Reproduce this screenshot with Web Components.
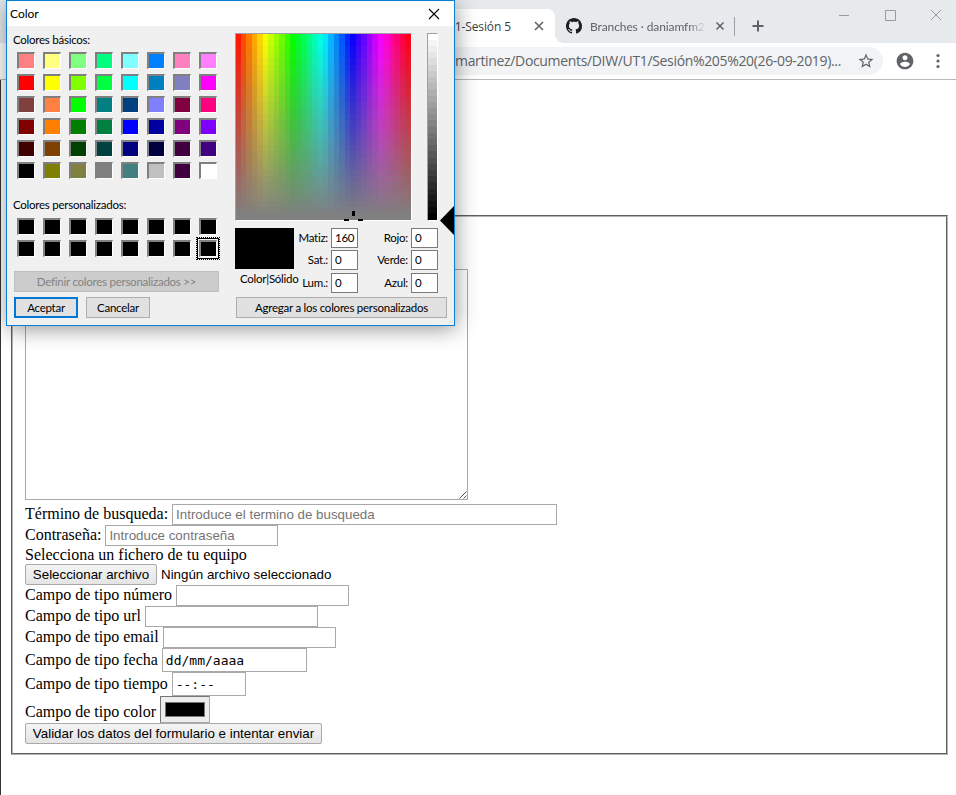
<!DOCTYPE html>
<html lang="es">
<head>
<meta charset="utf-8">
<title>Color</title>
<style>
  html, body { margin: 0; padding: 0; background: #fff; }
  body { width: 956px; height: 795px; overflow: hidden; position: relative; }
</style>
</head>
<body>
<browser-window>
  <tab-strip></tab-strip>
  <browser-toolbar>martinez/Documents/DIW/UT1/Sesión%205%20(26-09-2019)...</browser-toolbar>
  <form-panel>
    <form-row style="margin-top: 4px">Término de busqueda: <form-field w="385" ph>Introduce el termino de busqueda</form-field></form-row>
    <form-row>Contraseña: <form-field w="173" ph>Introduce contraseña</form-field></form-row>
    <form-row style="--row: 18px; --lh: 18px">Selecciona un fichero de tu equipo</form-row>
    <form-row><push-button w="132">Seleccionar archivo</push-button><small-note>Ningún archivo seleccionado</small-note></form-row>
    <form-row>Campo de tipo número <form-field w="173"></form-field></form-row>
    <form-row>Campo de tipo url <form-field w="173"></form-field></form-row>
    <form-row>Campo de tipo email <form-field w="173"></form-field></form-row>
    <form-row style="--row: 24px; --lh: 24px">Campo de tipo fecha <form-field w="145" h="24" mono>dd/mm/aaaa</form-field></form-row>
    <form-row style="--row: 24px; --lh: 24px">Campo de tipo tiempo <form-field w="74" h="24" mono>--:--</form-field></form-row>
    <form-row style="--row: 27px; --lh: 31px">Campo de tipo color <color-well></color-well></form-row>
    <form-row><push-button w="297">Validar los datos del formulario e intentar enviar</push-button></form-row>
  </form-panel>
</browser-window>
<color-dialog></color-dialog>

<script>
// small helper so every element just declares its markup + styles
function shadow(el, html) {
  el.attachShadow({ mode: 'open' }).innerHTML = html;
}

class BrowserWindow extends HTMLElement {
  constructor() {
    super();
    shadow(this, `<style>
      :host { display: flex; flex-direction: column; width: 956px; height: 795px; background: #fff; }
    </style><slot></slot>`);
  }
}

class TabStrip extends HTMLElement {
  constructor() {
    super();
    shadow(this, `<style>
      :host { display: flex; height: 43px; flex: none; background: #e7eaed; font: 12px "Open Sans", sans-serif; letter-spacing: -.1px; color: #5f6368; position: relative; }
      .active { width: 455px; margin: 9px 0 0 100px; height: 34px; background: #fff; border-radius: 0 8px 0 0; display: flex; align-items: center; justify-content: flex-end; padding-right: 11px; box-sizing: border-box; color: #3c4043; position: relative; }
      .active span { margin-right: 23px; }
      .corner { position: absolute; left: 555px; top: 35px; width: 8px; height: 8px; background: radial-gradient(circle at 8px 0, #e7eaed 7.5px, #fff 8px); }
      .tab { display: flex; align-items: center; width: 180px; margin-top: 9px; height: 34px; padding-left: 11px; box-sizing: border-box; }
      .tab svg.gh { width: 16px; height: 16px; margin-right: 8px; flex: none; }
      .title { width: 116px; flex: none; font: 12px Lato, sans-serif; letter-spacing: -.1px; white-space: nowrap; -webkit-mask-image: linear-gradient(to right, #000 85%, transparent); mask-image: linear-gradient(to right, #000 85%, transparent); }
      .x { width: 10px; height: 10px; flex: none; }
      .tab .x { margin-left: 9px; }
      .sep { width: 1px; height: 19px; background: #9aa0a6; margin: 17px 0 0 -1px; flex: none; }
      .plus { width: 12px; height: 12px; margin: 20px 0 0 17px; flex: none; }
      .controls { margin-left: auto; display: flex; height: 30px; }
      .controls svg { width: 46px; height: 30px; display: block; }
    </style>
    <div class="active"><span>1-Sesión 5</span>
      <svg class="x" viewBox="0 0 10 10"><path d="M1 1l8 8M9 1l-8 8" stroke="#5f6368" stroke-width="1.6" fill="none"/></svg>
    </div>
    <div class="corner"></div>
    <div class="tab">
      <svg class="gh" viewBox="0 0 16 16"><path fill="#1b1f23" d="M8 0C3.58 0 0 3.58 0 8c0 3.54 2.29 6.53 5.47 7.59.4.07.55-.17.55-.38 0-.19-.01-.82-.01-1.49-2.01.37-2.53-.49-2.69-.94-.09-.23-.48-.94-.82-1.13-.28-.15-.68-.52-.01-.53.63-.01 1.08.58 1.23.82.72 1.21 1.87.87 2.33.66.07-.52.28-.87.51-1.07-1.78-.2-3.64-.89-3.64-3.95 0-.87.31-1.59.82-2.15-.08-.2-.36-1.02.08-2.12 0 0 .67-.21 2.2.82.64-.18 1.32-.27 2-.27.68 0 1.36.09 2 .27 1.53-1.04 2.2-.82 2.2-.82.44 1.1.16 1.92.08 2.12.51.56.82 1.27.82 2.15 0 3.07-1.87 3.75-3.65 3.95.29.25.54.73.54 1.48 0 1.07-.01 1.93-.01 2.2 0 .21.15.46.55.38A8.013 8.013 0 0016 8c0-4.42-3.58-8-8-8z"/></svg>
      <div class="title">Branches · daniamfm2</div>
      <svg class="x" viewBox="0 0 10 10"><path d="M1.5 1.5l7 7M8.5 1.5l-7 7" stroke="#5f6368" stroke-width="1.5" fill="none"/></svg>
    </div>
    <div class="sep"></div>
    <svg class="plus" viewBox="0 0 12 12"><path d="M6 .5v11M.5 6h11" stroke="#5f6368" stroke-width="2" fill="none"/></svg>
    <div class="controls">
      <svg viewBox="0 0 46 30"><path d="M21 15.5h10" stroke="#9a9a9a" fill="none"/></svg>
      <svg viewBox="0 0 46 30"><path d="M21.5 10.5h10v10h-10z" stroke="#9a9a9a" fill="none"/></svg>
      <svg viewBox="0 0 46 30"><path d="M21 10l10 10M31 10l-10 10" stroke="#9a9a9a" fill="none"/></svg>
    </div>`);
  }
}

class BrowserToolbar extends HTMLElement {
  constructor() {
    super();
    shadow(this, `<style>
      :host { display: flex; align-items: center; height: 37px; flex: none; box-sizing: border-box; background: #fff; border-bottom: 1px solid #b8b8b8; position: relative; }
      .pill { margin-left: 100px; width: 783px; height: 28px; margin-top: -1px; border-radius: 0 14px 14px 0; background: #f1f3f4; display: flex; align-items: center; justify-content: flex-end; box-sizing: border-box; padding-right: 8px; font: 14px "Open Sans", sans-serif; letter-spacing: -.34px; color: #5f6368; white-space: nowrap; }
      .pill svg { width: 18px; height: 18px; margin-left: 16px; flex: none; }
      .avatar { width: 20px; height: 20px; margin: -1px 0 0 12px; flex: none; }
      .dots { width: 4px; height: 16px; margin: -1px 0 0 21px; flex: none; }
    </style>
    <div class="pill"><slot></slot>
      <svg viewBox="0 0 24 24"><path fill="#5f6368" d="M22 9.24l-7.19-.62L12 2 9.19 8.63 2 9.24l5.46 4.73L5.82 21 12 17.27 18.18 21l-1.63-7.03L22 9.24zM12 15.4l-3.76 2.27 1-4.28-3.32-2.88 4.38-.38L12 6.1l1.71 4.04 4.38.38-3.32 2.88 1 4.28L12 15.4z"/></svg>
    </div>
    <svg class="avatar" viewBox="0 0 24 24"><path fill="#5f6368" d="M12 2C6.48 2 2 6.48 2 12s4.48 10 10 10 10-4.48 10-10S17.52 2 12 2zm0 3c1.66 0 3 1.34 3 3s-1.34 3-3 3-3-1.34-3-3 1.34-3 3-3zm0 14.2c-2.5 0-4.71-1.28-6-3.22.03-1.99 4-3.08 6-3.08 1.99 0 5.97 1.09 6 3.08-1.29 1.94-3.5 3.22-6 3.22z"/></svg>
    <svg class="dots" viewBox="0 0 4 16"><circle cx="2" cy="2.5" r="1.6" fill="#5f6368"/><circle cx="2" cy="8" r="1.6" fill="#5f6368"/><circle cx="2" cy="13.5" r="1.6" fill="#5f6368"/></svg>`);
  }
}

class FormPanel extends HTMLElement {
  constructor() {
    super();
    shadow(this, `<style>
      :host { display: block; flex: 1; border-left: 1px solid #333; padding: 135px 8px 0 10px; font: 16px/18px "Liberation Serif", serif; color: #000; }
      .set { border: 2px groove #b4b4b4; padding: 52px 12px 9px; height: 540px; box-sizing: border-box; display: flex; flex-direction: column; }
      .area { width: 443px; height: 231px; box-sizing: border-box; border: 1px solid #a9a9a9; position: relative; flex: none; }
      .area svg { position: absolute; right: 0; bottom: 0; width: 9px; height: 9px; }
    </style>
    <div class="set">
      <div class="area"><svg viewBox="0 0 9 9"><path d="M8.5 1.5l-7 7M8.5 5.5l-3 3" stroke="#555" fill="none"/></svg></div>
      <slot></slot>
    </div>`);
  }
}

class FormRow extends HTMLElement {
  constructor() {
    super();
    shadow(this, `<style>
      :host { display: flex; align-items: flex-start; gap: 4px; height: var(--row, 21px); line-height: var(--lh, 19px); flex: none; white-space: nowrap; }
    </style><slot></slot>`);
  }
}

class FormField extends HTMLElement {
  constructor() {
    super();
    const ph = this.hasAttribute('ph'), mono = this.hasAttribute('mono');
    shadow(this, `<style>
      :host { display: flex; align-items: center; box-sizing: border-box; width: ${this.getAttribute('w')}px; height: ${this.getAttribute('h') || 21}px; flex: none; border: 1px solid #a9a9a9; background: #fff; padding: 0 3px; overflow: hidden;
        font: ${mono ? '13px "DejaVu Sans Mono", monospace' : '13.33px "Liberation Sans", sans-serif'}; color: ${ph ? '#757575' : '#000'}; }
    </style><slot></slot>`);
  }
}

class PushButton extends HTMLElement {
  constructor() {
    super();
    shadow(this, `<style>
      :host { display: flex; align-items: center; justify-content: center; box-sizing: border-box; width: ${this.getAttribute('w')}px; height: 21px; flex: none; border: 1px solid #a9a9a9; border-radius: 2px; background: linear-gradient(#f4f4f4, #e4e4e4); font: 13.33px "Liberation Sans", sans-serif; color: #000; }
    </style><slot></slot>`);
  }
}

class SmallNote extends HTMLElement {
  constructor() {
    super();
    shadow(this, `<style>:host { display: block; align-self: center; font: 13.33px "Liberation Sans", sans-serif; color: #000; }</style><slot></slot>`);
  }
}

class ColorWell extends HTMLElement {
  constructor() {
    super();
    shadow(this, `<style>
      :host { display: flex; align-items: center; justify-content: center; width: 50px; height: 27px; box-sizing: border-box; flex: none; border: 1px solid #767676; border-bottom-color: #a9a9a9; border-right-color: #a9a9a9; background: #ececec; }
      div { width: 40px; height: 15px; box-sizing: border-box; background: #000; border: 1px solid #777; }
    </style><div></div>`);
  }
}

const BASIC = [
  '#ff8080','#ffff80','#80ff80','#00ff80','#80ffff','#0080ff','#ff80c0','#ff80ff',
  '#ff0000','#ffff00','#80ff00','#00ff40','#00ffff','#0080c0','#8080c0','#ff00ff',
  '#804040','#ff8040','#00ff00','#008080','#004080','#8080ff','#800040','#ff0080',
  '#800000','#ff8000','#008000','#008040','#0000ff','#0000a0','#800080','#8000ff',
  '#400000','#804000','#004000','#004040','#000080','#000040','#400040','#400080',
  '#000000','#808000','#808040','#808080','#408080','#c0c0c0','#400040','#ffffff'
];

class ColorDialog extends HTMLElement {
  constructor() {
    super();
    const swatch = (c, extra) => `<i class="${extra || ''}" style="background:${c}"></i>`;
    const customs = Array.from({ length: 16 }, (_, i) => swatch('#000', i === 15 ? 'sel' : '')).join('');
    const num = (label, value) => `<label>${label}</label><output>${value}</output>`;
    shadow(this, `<style>
      :host { position: absolute; left: 6px; top: 0; width: 449px; height: 326px; box-sizing: border-box; border: 1px solid #0a7fd8; background: #f0f0f0; box-shadow: 1px 3px 20px rgba(0,0,0,.42); font: 11.5px Lato, sans-serif; letter-spacing: -.25px; color: #000; display: flex; flex-direction: column; }
      .title { height: 25px; flex: none; background: #fff; display: flex; align-items: center; justify-content: space-between; padding: 0 14px 0 3px; font-size: 12px; letter-spacing: 0; }
      .title svg { width: 12px; height: 12px; }
      .body { display: flex; flex: 1; padding: 6px 0 0 6px; position: relative; }
      .left { width: 222px; flex: none; }
      .cap { line-height: 16px; }
      .grid { display: grid; grid-template-columns: repeat(8, 18px); grid-auto-rows: 17px; gap: 5px 8px; margin: 4px 0 0 4px; }
      i { display: block; box-sizing: border-box; border-style: solid; border-width: 2px 1px 1px 2px; border-color: #808080 #fff #fff #808080; }
      i.sel { box-shadow: 0 0 0 1px #f0f0f0, 0 0 0 2px #000; outline: 1px dotted #000; outline-offset: 2px; }
      button { display: block; box-sizing: border-box; font: inherit; letter-spacing: inherit; color: #000; background: #e1e1e1; border: 1px solid #adadad; padding: 0; height: 21px; }
      .define { width: 205px; margin: 14px 0 0 1px; background: #cccccc; border-color: #bfbfbf; color: #838383; }
      .actions { display: flex; gap: 8px; margin: 5px 0 0 1px; }
      .actions button { width: 64px; }
      .actions .ok { border: 2px solid #0078d7; }
      .right { flex: none; width: 212px; margin-top: 1px; }
      .top { display: flex; gap: 15px; }
      canvas { display: block; border-style: solid; border-width: 1px; border-color: #a0a0a0 #fff #fff #a0a0a0; }
      .spec { position: relative; width: 177px; height: 188px; flex: none; }
      .spec b { position: absolute; background: #000; }
      .arrow { position: absolute; left: 433px; top: 180px; width: 14px; height: 29px; background: #000; clip-path: polygon(0 50%, 100% 0, 100% 100%); }
      .mid { display: flex; margin-top: 7px; }
      .preview { width: 65px; flex: none; }
      .preview div { width: 59px; height: 41px; background: #000; }
      .preview span { display: block; margin: 2px 0 0 5px; white-space: nowrap; line-height: 16px; }
      .nums { display: grid; grid-template-columns: 31px 27px 53px 27px; grid-template-rows: 22px 23px 20px; }
      .nums label { padding-right: 3px; line-height: 20px; white-space: nowrap; justify-self: end; }
      .nums output { box-sizing: border-box; height: 20px; width: 27px; background: #fff; border: 1px solid #7a7a7a; padding-left: 3px; line-height: 17px; }
      .add { width: 211px; margin: 4px 0 0 1px; }
    </style>
    <div class="title"><span>Color</span>
      <svg viewBox="0 0 12 12"><path d="M1 1l10 10M11 1L1 11" stroke="#000" stroke-width="1.1" fill="none"/></svg>
    </div>
    <div class="body">
      <div class="left">
        <div class="cap">Colores básicos:</div>
        <div class="grid">${BASIC.map(c => swatch(c)).join('')}</div>
        <div class="cap" style="margin-top:18px">Colores personalizados:</div>
        <div class="grid" style="margin-top:5px">${customs}</div>
        <button class="define">Definir colores personalizados &gt;&gt;</button>
        <div class="actions"><button class="ok">Aceptar</button><button>Cancelar</button></div>
      </div>
      <div class="right">
        <div class="top">
          <div class="spec"><canvas id="hue" width="175" height="186"></canvas>
            <b style="left:117px;top:178px;width:3px;height:5px"></b>
            <b style="left:109px;top:186px;width:5px;height:2px"></b>
            <b style="left:123px;top:186px;width:5px;height:2px"></b>
          </div>
          <canvas id="lum" width="9" height="186"></canvas>
        </div>
        <div class="mid">
          <div class="preview"><div></div><span>Color|Sólido</span></div>
          <div class="nums">
            ${num('Matiz:', 160)}${num('Rojo:', 0)}
            ${num('Sat.:', 0)}${num('Verde:', 0)}
            ${num('Lum.:', 0)}${num('Azul:', 0)}
          </div>
        </div>
        <button class="add">Agregar a los colores personalizados</button>
      </div>
      <div class="arrow"></div>
    </div>`);
  }
  connectedCallback() {
    // the Windows picker draws its gradient in coarse blocks, so paint block by block
    const hue = this.shadowRoot.getElementById('hue').getContext('2d');
    const cols = 32, rows = 30;
    for (let y = 0; y < rows; y++) {
      for (let x = 0; x < cols; x++) {
        hue.fillStyle = `hsl(${(x + .5) / cols * 360}, ${100 - y / (rows - 1) * 100}%, 50%)`;
        hue.fillRect(Math.floor(x * 175 / cols), Math.floor(y * 186 / rows), 7, 8);
      }
    }
    const lum = this.shadowRoot.getElementById('lum').getContext('2d');
    for (let y = 0; y < rows; y++) {
      const v = Math.round(255 - y / (rows - 1) * 255);
      lum.fillStyle = `rgb(${v},${v},${v})`;
      lum.fillRect(0, Math.floor(y * 186 / rows), 9, 8);
    }
  }
}

customElements.define('browser-window', BrowserWindow);
customElements.define('tab-strip', TabStrip);
customElements.define('browser-toolbar', BrowserToolbar);
customElements.define('form-panel', FormPanel);
customElements.define('form-row', FormRow);
customElements.define('form-field', FormField);
customElements.define('push-button', PushButton);
customElements.define('small-note', SmallNote);
customElements.define('color-well', ColorWell);
customElements.define('color-dialog', ColorDialog);
</script>
</body>
</html>
